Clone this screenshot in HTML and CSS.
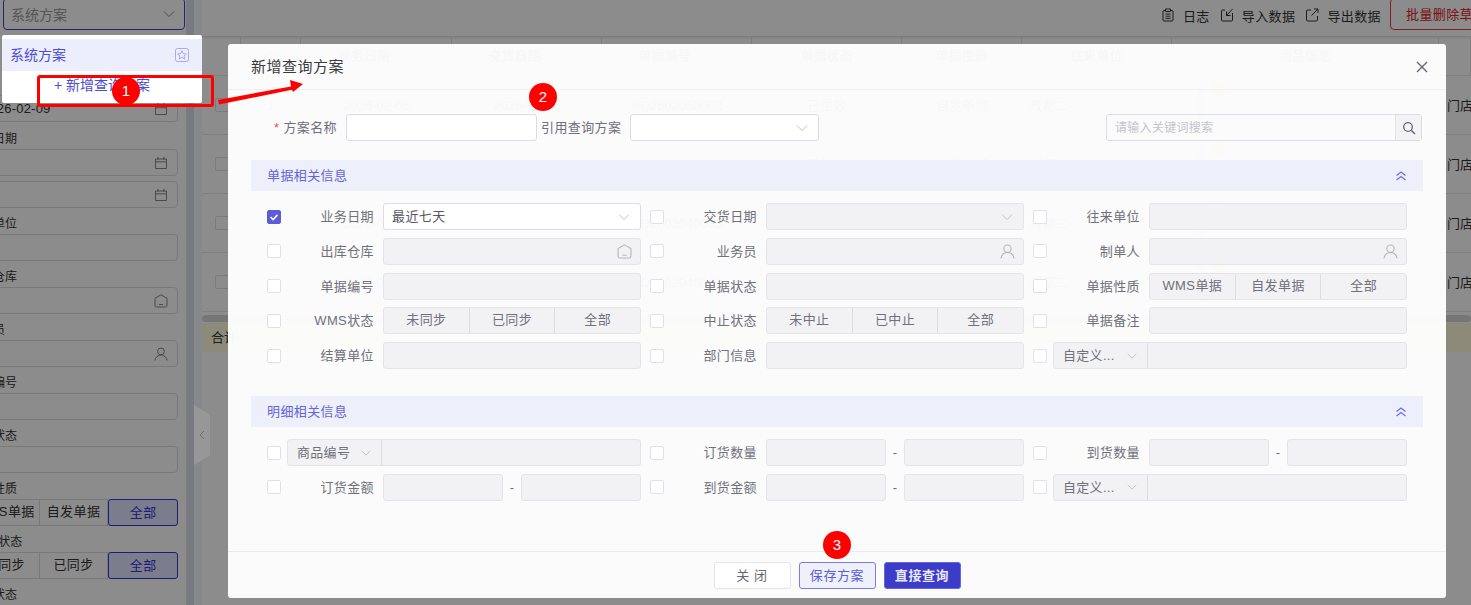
FILE: index.html
```html
<!DOCTYPE html>
<html lang="zh">
<head>
    <meta charset="UTF-8">
    <title>新增查询方案</title>
    <link rel="stylesheet" href="styles.css">
</head>
<body>
    <svg class="defs" width="0" height="0">
        <symbol id="i-chev" viewBox="0 0 14 14"><path d="M2 4.5 7 9.5 12 4.5" fill="none" stroke="currentColor"/></symbol>
        <symbol id="i-cal" viewBox="0 0 14 14"><path d="M1.5 3h11v9.5h-11zM1.5 5.8h11M4 1v3M10 1v3" fill="none" stroke="currentColor"/></symbol>
        <symbol id="i-home" viewBox="0 0 14 14"><path d="M7 .8 13 4.3V11.5a1.5 1.5 0 0 1-1.5 1.5h-9A1.5 1.5 0 0 1 1 11.5V4.3zM5 10.5h4" fill="none" stroke="currentColor"/></symbol>
        <symbol id="i-user" viewBox="0 0 14 14"><circle cx="7" cy="4.4" r="3.4" fill="none" stroke="currentColor"/><path d="M.8 13.5C1.5 10.2 4 8 7 8s5.500 2.200 6.200 5.500" fill="none" stroke="currentColor"/></symbol>
    </svg>

    <div class="page">
        <aside class="sidebar">
            <div class="scheme-select"><span>系统方案</span><svg class="ico"><use href="#i-chev"/></svg></div>
            <div class="side-form">
                <div class="side-input first">2026-02-09<svg class="ico"><use href="#i-cal"/></svg></div>
                <div class="side-label">业务日期</div>
                <div class="side-input"><svg class="ico"><use href="#i-cal"/></svg></div>
                <div class="side-input second"><svg class="ico"><use href="#i-cal"/></svg></div>
                <div class="side-label">往来单位</div>
                <div class="side-input"></div>
                <div class="side-label">出库仓库</div>
                <div class="side-input"><svg class="ico"><use href="#i-home"/></svg></div>
                <div class="side-label">业务员</div>
                <div class="side-input"><svg class="ico"><use href="#i-user"/></svg></div>
                <div class="side-label">单据编号</div>
                <div class="side-input"></div>
                <div class="side-label">单据状态</div>
                <div class="side-input"></div>
                <div class="side-label">单据性质</div>
                <div class="side-seg"><span>WMS单据</span><span>自发单据</span><span class="on">全部</span></div>
                <div class="side-label">WMS状态</div>
                <div class="side-seg"><span>未同步</span><span>已同步</span><span class="on">全部</span></div>
                <div class="side-label">中止状态</div>
                <div class="side-seg"><span>未中止</span><span>已中止</span><span class="on">全部</span></div>
            </div>
        </aside>
        <div class="splitter"></div>
        <div class="gutter"></div>

        <main class="main">
            <div class="toolbar">
                <span class="tool">
                    <svg class="tool-ico" viewBox="0 0 14 14"><path d="M4 2.500H3a1 1 0 0 0-1 1V12a1 1 0 0 0 1 1h8a1 1 0 0 0 1-1V3.500a1 1 0 0 0-1-1H10M4.500 1h5v2.500h-5zM4.500 6h5M4.500 8.200h5M4.500 10.400h5" fill="none" stroke="currentColor"/></svg>日志</span>
                <span class="tool">
                    <svg class="tool-ico" viewBox="0 0 14 14"><path d="M5 2H2.500a1 1 0 0 0-1 1v9a1 1 0 0 0 1 1h9a1 1 0 0 0 1-1V5M12.500 1 6.500 7.500M6.500 3.500v4h4" fill="none" stroke="currentColor"/></svg>导入数据</span>
                <span class="tool">
                    <svg class="tool-ico" viewBox="0 0 14 14"><path d="M6 2H2.500a1 1 0 0 0-1 1v9a1 1 0 0 0 1 1h9a1 1 0 0 0 1-1V8M6.500 7.500 13 1M9 1h4v4" fill="none" stroke="currentColor"/></svg>导出数据</span>
                <button class="btn-danger">批量删除草稿</button>
            </div>

            <div class="table">
                <div class="thead">
                    <span></span><span class="ctr">☆</span><span class="sort">业务日期</span><span class="sort">交货日期</span><span class="sort">单据编号</span><span class="ctr">单据状态</span><span class="ctr">单据性质</span><span class="ctr">往来单位</span><span class="ctr">商品信息</span><span></span>
                </div>
                <div class="trow">
                    <span class="ctr"><i class="cb"></i></span><span class="ctr">1</span><span class="ctr">2026-02-05</span><span class="ctr">2026-02-05</span><span class="ctr">XD2602050002</span><span class="ctr">已生效</span><span class="ctr">自发单据</span><span class="pad">成都二</span><span class="goods"><i class="thumb"></i><i class="dot"></i></span><span class="pad">门店</span>
                </div>
                <div class="trow">
                    <span class="ctr"><i class="cb"></i></span><span class="ctr">2</span><span class="ctr">2026-02-05</span><span class="ctr">2026-02-05</span><span class="ctr">XD2602050001</span><span class="ctr">已生效</span><span class="ctr">自发单据</span><span class="pad">成都二</span><span class="goods"><i class="thumb"></i><i class="dot"></i></span><span class="pad">门店</span>
                </div>
                <div class="trow">
                    <span class="ctr"><i class="cb"></i></span><span class="ctr">3</span><span class="ctr">2026-02-05</span><span class="ctr">2026-02-05</span><span class="ctr">XD2602040003</span><span class="ctr">已生效</span><span class="ctr">自发单据</span><span class="pad">成都二</span><span class="goods"><i class="thumb"></i><i class="dot"></i></span><span class="pad">门店</span>
                </div>
                <div class="trow">
                    <span class="ctr"><i class="cb"></i></span><span class="ctr">4</span><span class="ctr">2026-02-04</span><span class="ctr">2026-02-04</span><span class="ctr">XD2602040002</span><span class="ctr">已生效</span><span class="ctr">自发单据</span><span class="pad">成都二</span><span class="goods"><i class="thumb"></i><i class="dot"></i></span><span class="pad">门店</span>
                </div>
            </div>
            <div class="scrollbar"></div>
            <div class="total-row">合计</div>
        </main>
    </div>

    <div class="overlay"></div>

    <div class="collapse-tab">
        <svg width="8" height="12" viewBox="0 0 8 12"><path d="M6 2 2 6 6 10" fill="none" stroke="#6e6e6e"/></svg>
    </div>

    <div class="dropdown">
        <div class="dropdown-item">
            <span>系统方案</span>
            <svg class="star" viewBox="0 0 14 14"><rect x=".5" y=".5" width="13" height="13" rx="2" fill="none" stroke="currentColor"/><path d="M7 2.800 8.300 5.600 11.300 5.900 9 7.900 9.700 11 7 9.400 4.300 11 5 7.900 2.700 5.900 5.700 5.600z" fill="none" stroke="currentColor"/></svg>
        </div>
        <div class="dropdown-add">+ 新增查询方案</div>
    </div>

    <section class="modal">
        <header class="modal-head">
            <h2>新增查询方案</h2>
            <svg class="close" viewBox="0 0 12 12"><path d="M1 1 11 11M11 1 1 11" fill="none" stroke="currentColor" stroke-width="1.400"/></svg>
        </header>

        <div class="modal-body">
            <div class="plan-row">
                <label class="plan-name"><b>*</b> 方案名称</label>
                <div class="input name-input"></div>
                <label class="plan-ref">引用查询方案</label>
                <div class="input ref-input"><svg class="ico"><use href="#i-chev"/></svg></div>
                <div class="search">
                    <span class="search-text">请输入关键词搜索</span>
                    <span class="search-btn"><svg width="14" height="14" viewBox="0 0 14 14"><circle cx="6" cy="6" r="4.300" fill="none" stroke="currentColor" stroke-width="1.300"/><path d="M9.200 9.200 13 13" stroke="currentColor" stroke-width="1.500"/></svg></span>
                </div>
            </div>

            <div class="section-bar">
                <span>单据相关信息</span>
                <svg class="dbl" viewBox="0 0 12 12"><path d="M1.500 5.500 6 2 10.500 5.500M1.500 10 6 6.500 10.500 10" fill="none" stroke="currentColor" stroke-width="1.300"/></svg>
            </div>

            <div class="form-grid">
                <div class="cell"><i class="cb checked"><svg viewBox="0 0 14 14"><path d="M3 7 6 10 11 4.500" fill="none" stroke="#fff" stroke-width="1.800"/></svg></i><label>业务日期</label><div class="input"><span class="val">最近七天</span><svg class="ico"><use href="#i-chev"/></svg></div></div>
                <div class="cell"><i class="cb"></i><label>交货日期</label><div class="input off"><svg class="ico"><use href="#i-chev"/></svg></div></div>
                <div class="cell"><i class="cb"></i><label>往来单位</label><div class="input off"></div></div>

                <div class="cell"><i class="cb"></i><label>出库仓库</label><div class="input off"><svg class="ico big"><use href="#i-home"/></svg></div></div>
                <div class="cell"><i class="cb"></i><label>业务员</label><div class="input off"><svg class="ico big"><use href="#i-user"/></svg></div></div>
                <div class="cell"><i class="cb"></i><label>制单人</label><div class="input off"><svg class="ico big"><use href="#i-user"/></svg></div></div>

                <div class="cell"><i class="cb"></i><label>单据编号</label><div class="input off"></div></div>
                <div class="cell"><i class="cb"></i><label>单据状态</label><div class="input off"></div></div>
                <div class="cell"><i class="cb"></i><label>单据性质</label><div class="seg"><span>WMS单据</span><span>自发单据</span><span>全部</span></div></div>

                <div class="cell"><i class="cb"></i><label>WMS状态</label><div class="seg"><span>未同步</span><span>已同步</span><span>全部</span></div></div>
                <div class="cell"><i class="cb"></i><label>中止状态</label><div class="seg"><span>未中止</span><span>已中止</span><span>全部</span></div></div>
                <div class="cell"><i class="cb"></i><label>单据备注</label><div class="input off"></div></div>

                <div class="cell"><i class="cb"></i><label>结算单位</label><div class="input off"></div></div>
                <div class="cell"><i class="cb"></i><label>部门信息</label><div class="input off"></div></div>
                <div class="cell"><i class="cb"></i><div class="combo"><span class="combo-key"><span class="val">自定义...</span><svg class="ico"><use href="#i-chev"/></svg></span><span class="combo-val"></span></div></div>
            </div>

            <div class="section-bar second-bar">
                <span>明细相关信息</span>
                <svg class="dbl" viewBox="0 0 12 12"><path d="M1.500 5.500 6 2 10.500 5.500M1.500 10 6 6.500 10.500 10" fill="none" stroke="currentColor" stroke-width="1.300"/></svg>
            </div>

            <div class="form-grid">
                <div class="cell"><i class="cb"></i><div class="combo"><span class="combo-key"><span class="val">商品编号</span><svg class="ico"><use href="#i-chev"/></svg></span><span class="combo-val"></span></div></div>
                <div class="cell"><i class="cb"></i><label>订货数量</label><div class="range"><div class="input off"></div><span>-</span><div class="input off"></div></div></div>
                <div class="cell"><i class="cb"></i><label>到货数量</label><div class="range"><div class="input off"></div><span>-</span><div class="input off"></div></div></div>

                <div class="cell"><i class="cb"></i><label>订货金额</label><div class="range"><div class="input off"></div><span>-</span><div class="input off"></div></div></div>
                <div class="cell"><i class="cb"></i><label>到货金额</label><div class="range"><div class="input off"></div><span>-</span><div class="input off"></div></div></div>
                <div class="cell"><i class="cb"></i><div class="combo"><span class="combo-key"><span class="val">自定义...</span><svg class="ico"><use href="#i-chev"/></svg></span><span class="combo-val"></span></div></div>
            </div>
        </div>

        <footer class="modal-foot">
            <button class="btn">关 闭</button>
            <button class="btn btn-save">保存方案</button>
            <button class="btn btn-primary">直接查询</button>
        </footer>
    </section>

    <!-- 标注 -->
    <div class="mark-rect"></div>
    <svg class="mark-arrow" width="100" height="30" viewBox="215 80 100 30"><path d="M218 100 291 86.500 290 80 303 84 293 92 292 89.800 219 104.500z" fill="#f00"/></svg>
    <div class="badge badge-1">1</div>
    <div class="badge badge-2">2</div>
    <div class="badge badge-3">3</div>
</body>
</html>
```

FILE: styles.css
```css
* {
    box-sizing: border-box;
}

html, body {
    margin: 0;
    height: 605px;
    overflow: hidden;
}

body {
    position: relative;
    font-family: "Liberation Sans", "Noto Sans CJK SC", sans-serif;
    font-size: 13px;
    color: #333;
    background: #fff;
}

.defs {
    position: absolute;
}

.page {
    display: flex;
    height: 605px;
}

/* 左侧查询栏 */
.sidebar {
    width: 186px;
    flex: none;
    overflow: hidden;
}

.scheme-select {
    display: flex;
    align-items: center;
    justify-content: space-between;
    width: 182px;
    height: 32px;
    margin: -2px 0 0 3px;
    padding: 0 8px 0 7px;
    border: 1px solid #3f3fd8;
    border-radius: 4px;
    font-size: 14px;
    color: #999;
}

.scheme-select .ico {
    color: #888;
}

.ico {
    width: 14px;
    height: 14px;
    color: #bbb;
    flex: none;
}

.side-form {
    width: 208px;
    margin: 65px 0 0 -30px;
}

.side-label {
    height: 26px;
    margin-left: -1px;
    padding-top: 6px;
    line-height: 20px;
    font-size: 12px;
    color: #333;
    white-space: nowrap;
}

.side-input {
    display: flex;
    align-items: center;
    justify-content: space-between;
    height: 27px;
    padding: 0 9px 0 11px;
    border: 1px solid #ddd;
    border-radius: 4px;
}

.side-input .ico {
    margin-left: auto;
    color: #888;
}

.side-input.first {
    margin-bottom: 1px;
    letter-spacing: .2px;
    color: #333;
}

.side-input.second {
    margin-top: 5px;
}

.side-seg {
    display: flex;
    height: 27px;
    border: 1px solid #ddd;
    border-radius: 4px;
}

.side-seg span {
    flex: 1;
    text-align: center;
    line-height: 23px;
    letter-spacing: .4px;
    border-right: 1px solid #ddd;
    white-space: nowrap;
}

.side-seg span.on {
    margin: -1px -1px -1px 0;
    line-height: 25px;
    background: #e2e4ff;
    border: 1px solid #3535d8;
    border-radius: 3px;
    color: #3535d8;
}

.splitter {
    width: 8px;
    flex: none;
    background: #dcdfe8;
}

.gutter {
    width: 8px;
    flex: none;
    background: #f6f8ff;
}

/* 右侧列表 */
.main {
    flex: 1;
    min-width: 0;
    overflow: hidden;
}

.toolbar {
    display: flex;
    align-items: flex-start;
    justify-content: flex-end;
    height: 37px;
    border-bottom: 1px solid #e4e4e4;
    box-shadow: 0 1px 2px rgba(0,0,0,0.1);
}

.tool {
    display: flex;
    align-items: center;
    gap: 8px;
    height: 28px;
    margin: 1px 10px 0 0;
    letter-spacing: .4px;
    white-space: nowrap;
    color: #333;
}

.tool-ico {
    width: 14px;
    height: 14px;
}

.btn-danger {
    width: 100px;
    height: 32px;
    margin: -2px -19px 0 -1px;
    padding: 0 0 2px 15px;
    border: 1px solid #e23c3c;
    border-radius: 4px;
    background: #fff;
    color: #e02020;
    font: inherit;
    letter-spacing: .4px;
    text-align: left;
    white-space: nowrap;
    overflow: hidden;
}

.thead, .trow {
    display: grid;
    grid-template-columns: 39px 60px 151px 150px 150px 150px 120px 150px 267px 32px;
    border-bottom: 1px solid #e6e6e6;
}

.thead {
    height: 39px;
    font-weight: bold;
    color: #555;
}

.thead span {
    line-height: 38px;
    border-right: 1px solid #e6e6e6;
}

.trow {
    height: 59px;
    line-height: 60px;
}

.trow .cb {
    display: inline-block;
    margin-top: 22px;
    vertical-align: top;
}

.ctr {
    text-align: center;
}

.sort {
    padding-right: 24px;
    text-align: center;
}

.pad {
    padding-left: 8px;
    white-space: nowrap;
}

.goods {
    position: relative;
}

.thumb {
    position: absolute;
    top: 11px;
    left: 26px;
    width: 7px;
    height: 38px;
    background: #ddd;
}

.dot {
    position: absolute;
    top: 6px;
    left: 39px;
    width: 14px;
    height: 14px;
    border-radius: 50%;
    background: #f6c35a;
}

.scrollbar {
    height: 7px;
    margin-top: 3px;
    border-radius: 4px;
    background: #d8d8d8;
}

.total-row {
    height: 29px;
    margin-top: 1px;
    padding-left: 9px;
    line-height: 29px;
    background: #fffbdc;
}

.overlay {
    position: absolute;
    inset: 0;
    background: rgba(0,0,0,0.45);
}

.collapse-tab {
    position: absolute;
    left: 194px;
    top: 405px;
    display: flex;
    align-items: center;
    justify-content: center;
    width: 16px;
    height: 60px;
    background: #979797;
    clip-path: polygon(0 0, 100% 16%, 100% 84%, 0 100%);
}

/* 方案下拉 */
.dropdown {
    position: absolute;
    left: 2px;
    top: 35px;
    width: 200px;
    height: 68px;
    padding-top: 4px;
    border-radius: 2px;
    background: #fff;
    color: #4d4dd4;
}

.dropdown-item {
    display: flex;
    align-items: center;
    justify-content: space-between;
    height: 32px;
    padding: 0 13px 2px 8px;
    background: #eceefc;
    font-size: 14px;
}

.star {
    width: 14px;
    height: 14px;
    margin-top: 2px;
    color: #a9a9ee;
}

.dropdown-add {
    margin-top: 4px;
    padding-left: 52px;
    line-height: 20px;
    font-size: 14px;
}

/* 弹窗 */
.modal {
    position: absolute;
    left: 228px;
    top: 44px;
    display: flex;
    flex-direction: column;
    width: 1218px;
    height: 554px;
    border-radius: 3px;
    background: rgba(255,255,255,0.965);
}

.modal-head {
    display: flex;
    align-items: center;
    justify-content: space-between;
    height: 46px;
    padding: 0 18px 0 23px;
    border-bottom: 1px solid #f0f0f2;
    flex: none;
}

.modal-head h2 {
    margin: 0 0 2px;
    font-size: 15px;
    font-weight: 400;
    letter-spacing: .5px;
    color: #3a3a40;
}

.close {
    width: 12px;
    height: 12px;
    color: #66667a;
}

.modal-body {
    flex: 1;
    padding: 24px 23px 0;
}

.plan-row {
    display: flex;
    align-items: center;
    height: 27px;
}

.plan-row label {
    padding-bottom: 2px;
    letter-spacing: .4px;
    color: #70707a;
    white-space: nowrap;
}

.plan-name {
    width: 95px;
    text-align: right;
    padding-right: 9px;
}

.plan-name b {
    color: #f05050;
    font-weight: normal;
}

.name-input {
    width: 191px;
}

.plan-ref {
    margin: 0 9px 0 4px;
    letter-spacing: .5px;
}

.ref-input {
    width: 189px;
}

.search {
    display: flex;
    width: 316px;
    height: 27px;
    margin-left: auto;
    margin-right: 1px;
    border: 1px solid #dcdce8;
    border-radius: 3px;
}

.search-text {
    flex: 1;
    padding-left: 8px;
    line-height: 27px;
    font-size: 12px;
    letter-spacing: .3px;
    color: #c4c4cc;
}

.search-btn {
    display: flex;
    align-items: center;
    justify-content: center;
    width: 26px;
    border-left: 1px solid #e2e2ea;
    background: #f3f3f6;
    color: #66667a;
}

.section-bar {
    display: flex;
    align-items: center;
    justify-content: space-between;
    width: 1172px;
    height: 31px;
    margin-top: 19px;
    padding: 0 16px 0 16px;
    background: #edeffb;
    color: #6464d8;
    letter-spacing: .4px;
}

.section-bar span {
    padding-bottom: 2px;
}

.second-bar {
    margin-top: 27px;
}

.dbl {
    width: 12px;
    height: 12px;
    color: #6c6cf0;
}

.form-grid {
    display: grid;
    grid-template-columns: repeat(3, 374px);
    grid-auto-rows: 27px;
    column-gap: 9px;
    row-gap: 7.750px;
    margin: 12px 0 0 16px;
}

.cell {
    display: flex;
    align-items: center;
}

.cb {
    flex: none;
    display: block;
    width: 14px;
    height: 14px;
    border: 1px solid #e0e0e6;
    border-radius: 2px;
    background: #fff;
}

.cb.checked {
    background: #5c5cd8;
    border-color: #5c5cd8;
}

.cb.checked svg {
    display: block;
    width: 12px;
    height: 12px;
}

.cell label {
    width: 93px;
    padding-bottom: 2px;
    text-align: right;
    letter-spacing: .4px;
    color: #70707a;
    flex: none;
    white-space: nowrap;
}

.cell > .input, .cell > .seg, .cell > .range {
    width: 258px;
    margin-left: 9px;
}

.input {
    display: flex;
    align-items: center;
    justify-content: space-between;
    height: 27px;
    padding: 0 9px 0 8px;
    border: 1px solid #dcdce8;
    border-radius: 3px;
    background: #fff;
    letter-spacing: .4px;
    color: #55555f;
}

.val {
    padding-bottom: 2px;
}

.input .ico {
    margin-left: auto;
    color: #c0c0c8;
}

.input .ico.big {
    width: 15px;
    height: 15px;
    margin-right: -1px;
    color: #b4b4bc;
}

.input.off {
    background: #f2f2f5;
    border-color: #e4e4ea;
}

.seg {
    display: flex;
    height: 27px;
    border: 1px solid #e4e4ea;
    border-radius: 3px;
    background: #f2f2f5;
}

.seg span {
    flex: 1;
    text-align: center;
    line-height: 23px;
    letter-spacing: .4px;
    color: #70707a;
    border-right: 1px solid #dcdce2;
}

.seg span:last-child {
    border-right: none;
}

.range {
    display: flex;
    align-items: center;
    justify-content: space-between;
    color: #70707a;
}

.range .input {
    width: 120px;
}

.combo {
    display: flex;
    width: 354px;
    height: 27px;
    margin-left: 6px;
    border: 1px solid #e4e4ea;
    border-radius: 3px;
    background: #f2f2f5;
}

.combo-key {
    display: flex;
    align-items: center;
    justify-content: space-between;
    width: 94px;
    padding: 0 9px;
    border-right: 1px solid #dcdce2;
    letter-spacing: .3px;
    color: #70707a;
    white-space: nowrap;
    flex: none;
}

.combo-key .ico {
    width: 12px;
    height: 12px;
}

.modal-foot {
    display: flex;
    justify-content: center;
    gap: 8px;
    height: 47px;
    padding-top: 10px;
    border-top: 1px solid #eaeaee;
    flex: none;
}

.btn {
    width: 77px;
    height: 27px;
    padding: 0 0 2px;
    border: 1px solid #e4e4ea;
    border-radius: 3px;
    background: #fff;
    font: inherit;
    letter-spacing: .6px;
    color: #66666e;
}

.btn-save {
    border-color: #7c7ce4;
    background: #eef0fc;
    color: #5c5cd6;
}

.btn-primary {
    border-color: #6666dc;
    background: #3c3cc8;
    color: #e8e8fa;
    font-weight: bold;
}

/* 红色标注 */
.mark-rect {
    position: absolute;
    left: 37px;
    top: 75px;
    width: 177px;
    height: 32px;
    border: 3px solid #f00;
    border-radius: 3px;
}

.mark-arrow {
    position: absolute;
    left: 215px;
    top: 80px;
}

.badge {
    position: absolute;
    width: 28px;
    height: 28px;
    border-radius: 50%;
    background: #f00;
    color: #fff;
    font-size: 15px;
    line-height: 28px;
    text-align: center;
}

.badge-1 {
    left: 112px;
    top: 77px;
}

.badge-2 {
    left: 529px;
    top: 83px;
}

.badge-3 {
    left: 823px;
    top: 531px;
}
```
